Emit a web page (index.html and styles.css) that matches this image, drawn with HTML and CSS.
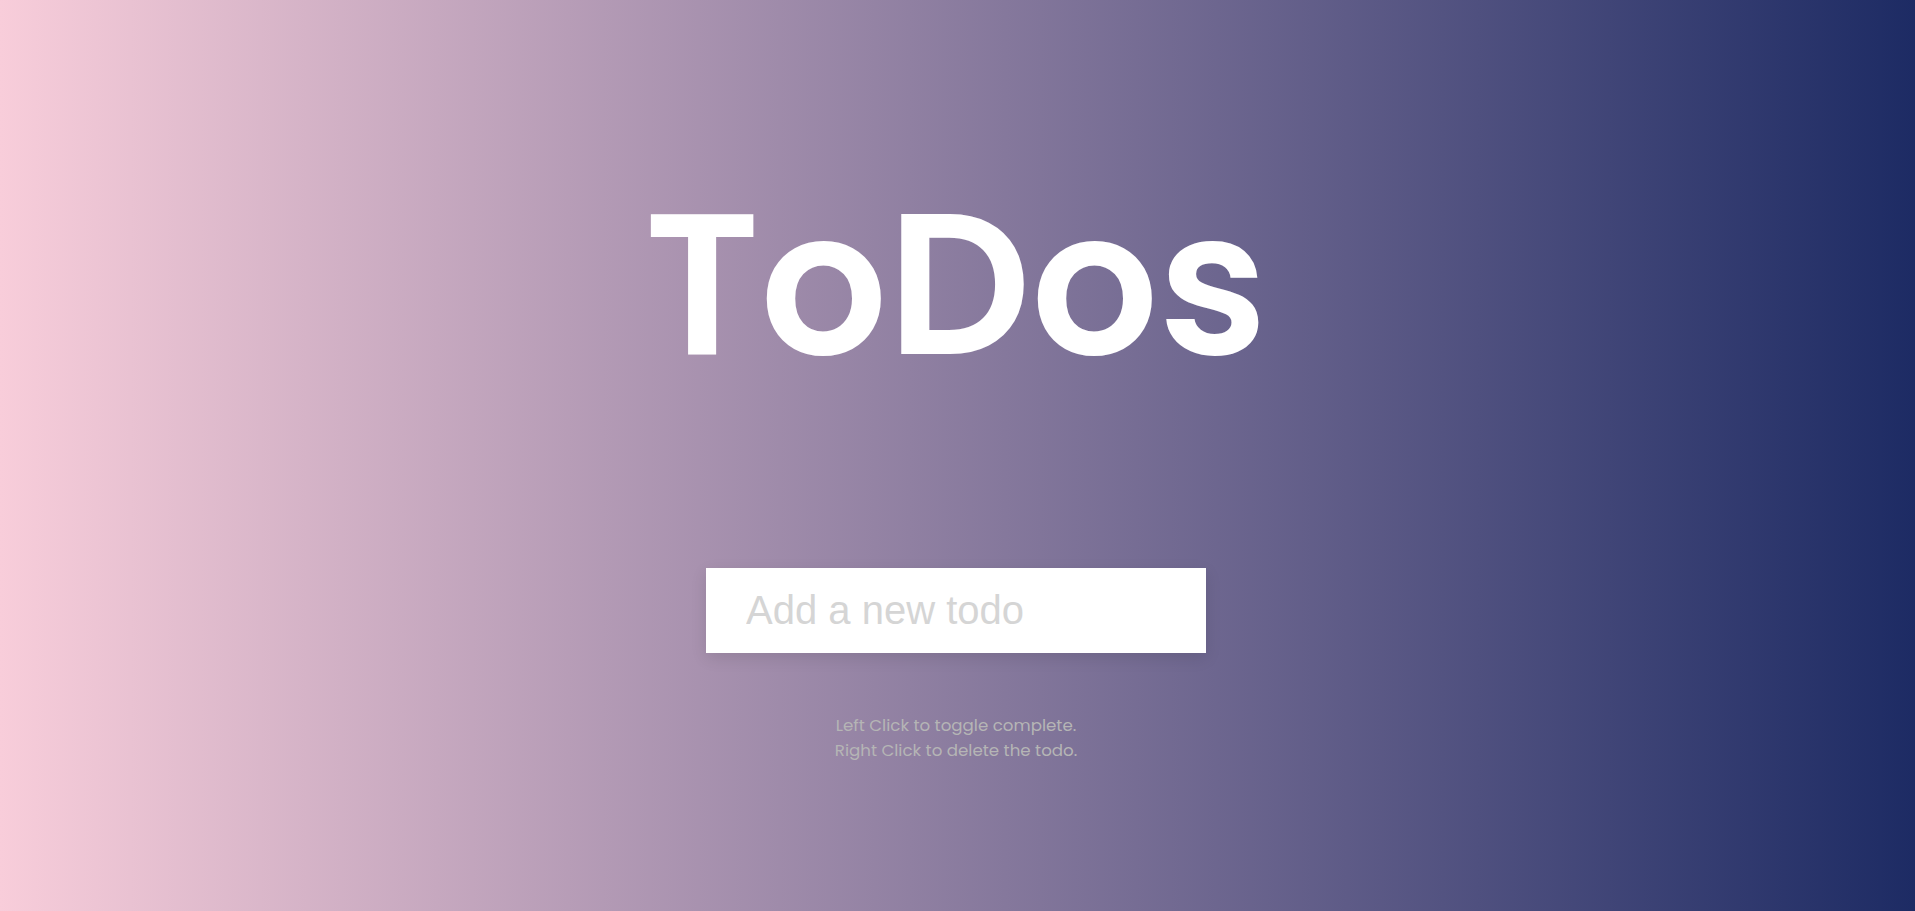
FILE: index.html
```
<!DOCTYPE html>
<html lang="en">
<head>
<meta charset="UTF-8">
<meta name="viewport" content="width=device-width, initial-scale=1">
<title>ToDos</title>
<link rel="stylesheet" href="styles.css">
</head>
<body class="page">
<h1 class="title">ToDos</h1>
<form class="todo-form">
<input type="text" class="todo-input" placeholder="Add a new todo" aria-label="Add a new todo" autocomplete="off">
</form>
<small class="hint">Left Click to toggle complete.<br>Right Click to delete the todo.</small>
</body>
</html>
```
FILE: styles.css
```
* {
  box-sizing: border-box;
}

.page {
  display: flex;
  flex-direction: column;
  align-items: center;
  justify-content: center;
  min-height: 100vh;
  margin: 0;
  padding: 0 3px 12px 0;
  color: #444;
  font-family: Poppins, Inter, sans-serif;
  font-size: 20px;
  background: linear-gradient(to right, #f8cdda, #1d2b64);
}

.title {
  margin: 0 0 136px;
  color: #fff;
  font-size: 200px;
  font-weight: 600;
  line-height: 296px;
  text-align: center;
}

.todo-form {
  width: 500px;
  max-width: 100%;
  box-shadow: 0 5px 15px rgba(0, 0, 0, 0.1);
}

.todo-input {
  display: block;
  width: 100%;
  padding: 20px 40px;
  border: none;
  color: #444;
  font-family: Arial, "Liberation Sans", sans-serif;
  font-size: 40px;
  line-height: 45px;
}

.todo-input::placeholder {
  color: #d5d5d5;
}

.todo-input:focus {
  outline: none;
}

.hint {
  margin: 60px 0 0;
  color: #b5b5b5;
  font-size: smaller;
  line-height: 25px;
  text-align: center;
}
```
